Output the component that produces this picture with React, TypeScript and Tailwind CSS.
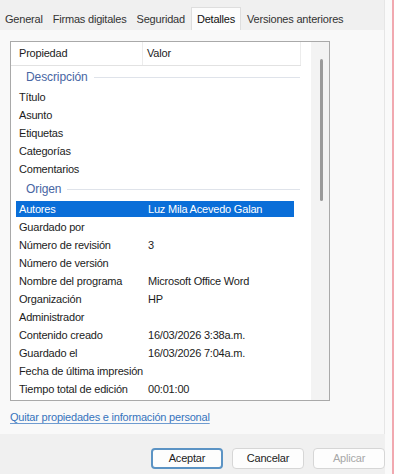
import React from 'react';

const font = { fontFamily: '"Liberation Sans", Arial, sans-serif' };

type Row = { k: string; v?: string; selected?: boolean };

const descripcion: Row[] = [
  { k: 'Título' },
  { k: 'Asunto' },
  { k: 'Etiquetas' },
  { k: 'Categorías' },
  { k: 'Comentarios' },
];

const origen: Row[] = [
  { k: 'Autores', v: 'Luz Mila Acevedo Galan', selected: true },
  { k: 'Guardado por' },
  { k: 'Número de revisión', v: '3' },
  { k: 'Número de versión' },
  { k: 'Nombre del programa', v: 'Microsoft Office Word' },
  { k: 'Organización', v: 'HP' },
  { k: 'Administrador' },
  { k: 'Contenido creado', v: '16/03/2026 3:38a.m.' },
  { k: 'Guardado el', v: '16/03/2026 7:04a.m.' },
  { k: 'Fecha de última impresión' },
  { k: 'Tiempo total de edición', v: '00:01:00' },
];

const GroupHeader = ({ title }: { title: string }) => (
  <div className="h-[22px] flex items-center pl-[15px] pr-[11px] gap-[6px]">
    <span className="text-[12px] text-[#4866a3] tracking-[-0.1px]">{title}</span>
    <div className="flex-1 h-px bg-[#dfe3ea]" />
  </div>
);

const PropRow = ({ row }: { row: Row }) => (
  <div className="h-[18px] flex items-center pl-[5px] pr-[17px]">
    <div
      className={`flex-1 h-[16px] flex items-center ${row.selected ? 'bg-[#0a6ed8] text-white' : 'text-[#1c1c1c]'}`}
    >
      <span className="w-[132px] pl-[3px] truncate">{row.k}</span>
      <span>{row.v ?? ''}</span>
    </div>
  </div>
);

const Tab = ({ label, active }: { label: string; active?: boolean }) => (
  <div
    className={`px-[4px] flex items-center ${
      active ? 'h-[23px] px-[5px] bg-[#fcfcfc] border border-b-0 border-[#dedede] text-[#111]' : 'h-[22px] text-[#333]'
    }`}
  >
    {label}
  </div>
);

const Btn = ({ label, primary, disabled }: { label: string; primary?: boolean; disabled?: boolean }) => (
  <div
    className={`w-[72px] h-[21px] rounded-[4px] flex items-center justify-center bg-[#fdfdfd] ${
      primary ? 'border-2 border-[#5b93c4]' : 'border border-[#d6d6d6]'
    } ${disabled ? 'text-[#a8a8a8]' : 'text-[#1c1c1c]'}`}
  >
    {label}
  </div>
);

export default function App() {
  return (
    <div
      className="w-[394px] h-[474px] bg-[#f7f7f7] flex overflow-hidden text-[11px] tracking-[-0.2px] leading-none"
      style={font}
    >
      <div className="w-[385px] flex flex-col border-r border-[#e6e6e6]">
        {/* Tabs */}
        <div className="h-[30px] bg-[#f0f0f0] flex items-end pl-[1px] gap-[2px]">
          <Tab label="General" />
          <Tab label="Firmas digitales" />
          <Tab label="Seguridad" />
          <Tab label="Detalles" active />
          <Tab label="Versiones anteriores" />
        </div>

        {/* Panel */}
        <div className="h-[404px] bg-[#f9f9f9] flex flex-col pt-[11px] pl-[10px]">
          <div className="w-[320px] h-[360px] bg-white border border-[#a9a9a9] flex overflow-hidden">
            <div className="w-[300px] flex flex-col">
              {/* Header */}
              <div className="h-[24px] shrink-0 flex items-center border-b border-[#e2e2e2] mr-[10px]">
                <span className="w-[132px] pl-[8px] h-full flex items-center border-r border-[#ececec] text-[#1c1c1c]">
                  Propiedad
                </span>
                <span className="flex-1 pl-[4px] h-full flex items-center border-r border-[#ececec] text-[#1c1c1c]">
                  Valor
                </span>
              </div>
              <GroupHeader title="Descripción" />
              {descripcion.map((r) => (
                <PropRow key={r.k} row={r} />
              ))}
              <GroupHeader title="Origen" />
              {origen.map((r) => (
                <PropRow key={r.k} row={r} />
              ))}
            </div>
            {/* Scrollbar */}
            <div className="flex-1 bg-[#f3f3f3] flex justify-center">
              <div className="w-[3px] h-[142px] mt-[17px] ml-[2px] rounded-full bg-[#9a9a9a]" />
            </div>
          </div>

          <div className="h-[33px] flex items-center">
            <span className="text-[#3674bd] underline underline-offset-2 decoration-[#6e9bd0]">
              Quitar propiedades e información personal
            </span>
          </div>
        </div>

        {/* Footer */}
        <div className="flex-1 bg-[#f0f0f0] flex items-start justify-end gap-[9px] pt-[14px] -mr-[1px]">
          <Btn label="Aceptar" primary />
          <Btn label="Cancelar" />
          <Btn label="Aplicar" disabled />
        </div>
      </div>
      <div className="flex-1 bg-[#fafafa]" />
      <div className="w-[2px] bg-[#f1a9b0]" />
    </div>
  );
}
